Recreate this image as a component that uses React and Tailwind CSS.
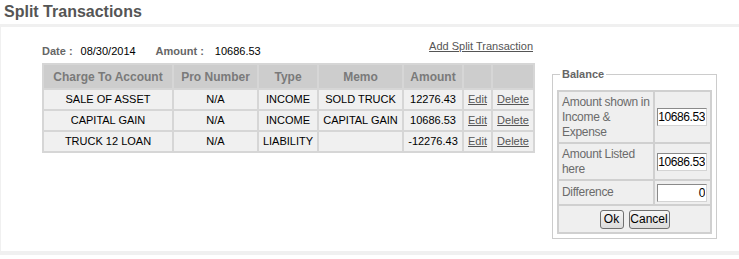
const rows = [
  { account: 'SALE OF ASSET', pro: 'N/A', type: 'INCOME', memo: 'SOLD TRUCK', amount: '12276.43' },
  { account: 'CAPITAL GAIN', pro: 'N/A', type: 'INCOME', memo: 'CAPITAL GAIN', amount: '10686.53' },
  { account: 'TRUCK 12 LOAN', pro: 'N/A', type: 'LIABILITY', memo: '', amount: '-12276.43' },
];

const cell = 'border-2 border-[#d6d6d6] text-center align-middle';
const bcell = 'border-2 border-[#d0d0d0] align-middle';

const NumInput = ({ value }) => (
  <input
    readOnly
    value={value}
    className="h-[18px] w-[50px] border border-t-[#8a8a8a] border-l-[#8a8a8a] border-r-[#d4d4d4] border-b-[#d4d4d4] bg-white pr-[1px] text-right text-[12px] leading-none tracking-[-0.4px] text-black outline-none"
  />
);

const App = () => {
  return (
    <div className="h-[259px] w-[739px] overflow-hidden bg-white text-[11px] text-black [font-family:'Liberation_Sans',Arial,sans-serif]">
      <h1 className="h-[24px] pl-[4px] pt-[2px] text-[16px] font-bold leading-[19px] text-[#555]">
        Split Transactions
      </h1>

      <div className="flex h-[231px] border-t-[3px] border-b-4 border-l border-[#f0f0f0] pl-[41px]">
        {/* left: header line + grid */}
        <div className="w-[491px] pt-[13px]">
          <div className="flex h-[23px] justify-between leading-[13px]">
            <div className="mt-[5px] flex">
              <span className="font-bold text-[#666]">Date :</span>
              <span className="ml-[8px] w-[75px]">08/30/2014</span>
              <span className="font-bold text-[#666]">Amount :</span>
              <span className="ml-[11px]">10686.53</span>
            </div>
            <a className="cursor-pointer text-[#555] underline">Add Split Transaction</a>
          </div>

          <table className="w-[491px] table-fixed border-collapse border-2 border-[#d6d6d6]">
            <colgroup>
              <col className="w-[130px]" />
              <col className="w-[85px]" />
              <col className="w-[60px]" />
              <col className="w-[85px]" />
              <col className="w-[60px]" />
              <col className="w-[29px]" />
              <col className="w-[42px]" />
            </colgroup>
            <thead>
              <tr className="h-[25px] bg-[#cdcdcd] text-[12px] font-bold text-[#7a7a7a]">
                <th className={cell}>Charge To Account</th>
                <th className={cell}>Pro Number</th>
                <th className={cell}>Type</th>
                <th className={cell}>Memo</th>
                <th className={cell}>Amount</th>
                <th className={cell}></th>
                <th className={cell}></th>
              </tr>
            </thead>
            <tbody>
              {rows.map((r) => (
                <tr key={r.account} className="h-[21px] bg-[#f0f0f0]">
                  <td className={cell}>{r.account}</td>
                  <td className={cell}>{r.pro}</td>
                  <td className={cell}>{r.type}</td>
                  <td className={cell}>{r.memo}</td>
                  <td className={cell}>{r.amount}</td>
                  <td className={cell}>
                    <a className="cursor-pointer text-[#555] underline">Edit</a>
                  </td>
                  <td className={cell}>
                    <a className="cursor-pointer text-[#555] underline">Delete</a>
                  </td>
                </tr>
              ))}
            </tbody>
          </table>
        </div>

        {/* right: balance box */}
        <fieldset className="ml-[19px] mt-[41px] h-fit w-[163px] border border-[#cccccc] px-[4px] pb-[4px]">
          <legend className="ml-[3px] px-[2px] text-[11px] font-bold leading-[13px] text-[#666]">Balance</legend>
          <table className="mt-[9px] w-[153px] table-fixed border-collapse border-2 border-[#d0d0d0] bg-[#efefef] text-[12px] leading-[15px] text-[#6b6b6b]">
            <colgroup>
              <col className="w-[96px]" />
              <col className="w-[57px]" />
            </colgroup>
            <tbody>
              <tr className="h-[52px]">
                <td className={`${bcell} pl-[3px] pr-0 tracking-[-0.3px]`}>Amount shown in Income &amp; Expense</td>
                <td className={`${bcell} pl-[2px]`}>
                  <NumInput value="10686.53" />
                </td>
              </tr>
              <tr className="h-[37px]">
                <td className={`${bcell} pl-[3px] pr-0 tracking-[-0.3px]`}>Amount Listed here</td>
                <td className={`${bcell} pl-[2px]`}>
                  <NumInput value="10686.53" />
                </td>
              </tr>
              <tr className="h-[25px]">
                <td className={`${bcell} pl-[3px] pr-0 tracking-[-0.3px]`}>Difference</td>
                <td className={`${bcell} pl-[2px]`}>
                  <NumInput value="0" />
                </td>
              </tr>
              <tr className="h-[28px]">
                <td colSpan={2} className={`${bcell} border-b-0 text-center`}>
                  <div className="flex justify-center gap-[5px] pl-[-2px]">
                    <button className="h-[19px] w-[24px] rounded-[3px] border border-[#707070] bg-gradient-to-b from-[#f6f6f6] to-[#dcdcdc] text-[12px] leading-none text-black">
                      Ok
                    </button>
                    <button className="h-[19px] w-[41px] rounded-[3px] border border-[#707070] bg-gradient-to-b from-[#f6f6f6] to-[#dcdcdc] text-[12px] leading-none text-black">
                      Cancel
                    </button>
                  </div>
                </td>
              </tr>
            </tbody>
          </table>
        </fieldset>
      </div>
    </div>
  );
};

export default App;
